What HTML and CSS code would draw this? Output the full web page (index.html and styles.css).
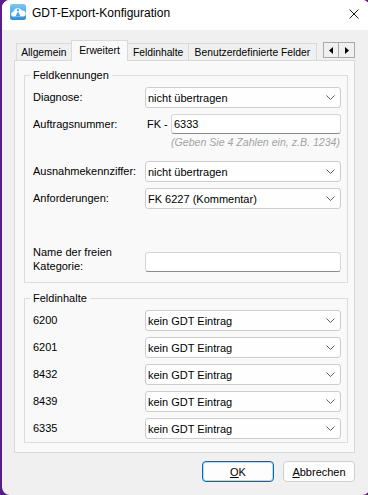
FILE: index.html
```
<!DOCTYPE html>
<html lang="de">
<head>
<meta charset="utf-8">
<title>GDT-Export-Konfiguration</title>
<link rel="stylesheet" href="styles.css">
</head>
<body>
<div class="window">
  <div class="titlebar">
    <svg class="app-icon" width="16" height="16" viewBox="0 0 16 16">
      <defs>
        <linearGradient id="ig" x1="0" y1="0" x2="0" y2="1">
          <stop offset="0" stop-color="#7cc8f6"/>
          <stop offset="1" stop-color="#2d8fe0"/>
        </linearGradient>
      </defs>
      <rect x="0" y="0" width="16" height="16" rx="2.5" fill="url(#ig)"/>
      <path d="M2.5 12.5 A2.6 2.6 0 0 1 3.6 7.6 A4.4 4.4 0 0 1 11.8 6.6 A3 3 0 0 1 13.5 12.5 Z" fill="#fff"/>
      <path d="M8 7.2 L10.6 12.5 H5.4 Z" fill="#4aa6ea"/>
      <circle cx="8" cy="6.2" r="1.1" fill="#4aa6ea"/>
    </svg>
    <div class="title">GDT-Export-Konfiguration</div>
    <svg class="close" width="10" height="10" viewBox="0 0 10 10">
      <path d="M0.5 0.5 L9.5 9.5 M9.5 0.5 L0.5 9.5" stroke="#1a1a1a" stroke-width="1" fill="none"/>
    </svg>
  </div>

  <div class="content">
    <div class="tabs">
      <div class="tab tab-allg">Allgemein</div>
      <div class="tab tab-active">Erweitert</div>
      <div class="tab tab-feld">Feldinhalte</div>
      <div class="tab tab-benutzer">Benutzerdefinierte Felder</div>
      <div class="tab-scroll">
        <div class="scroll-btn">
          <svg width="4" height="7" viewBox="0 0 4 7"><path d="M4 0 L0 3.5 L4 7 Z" fill="#000"/></svg>
        </div>
        <div class="scroll-btn">
          <svg width="4" height="7" viewBox="0 0 4 7"><path d="M0 0 L4 3.5 L0 7 Z" fill="#000"/></svg>
        </div>
      </div>
    </div>

    <div class="panel">
      <fieldset class="group group-first">
        <legend>Feldkennungen</legend>
        <div class="row row-first">
          <div class="label">Diagnose:</div>
          <div class="combo"><span>nicht übertragen</span><svg class="chev" width="9" height="5" viewBox="0 0 9 5"><path d="M0.5 0.5 L4.5 4.5 L8.5 0.5" stroke="#5f5f5f" fill="none"/></svg></div>
        </div>
        <div class="row row-gap">
          <div class="label">Auftragsnummer:</div>
          <div class="fk">FK -</div>
          <div class="textbox textbox-fk">6333</div>
        </div>
        <div class="hint">(Geben Sie 4 Zahlen ein, z.B. 1234)</div>
        <div class="row row-ausnahme">
          <div class="label">Ausnahmekennziffer:</div>
          <div class="combo"><span>nicht übertragen</span><svg class="chev" width="9" height="5" viewBox="0 0 9 5"><path d="M0.5 0.5 L4.5 4.5 L8.5 0.5" stroke="#5f5f5f" fill="none"/></svg></div>
        </div>
        <div class="row row-gap">
          <div class="label">Anforderungen:</div>
          <div class="combo"><span>FK 6227 (Kommentar)</span><svg class="chev" width="9" height="5" viewBox="0 0 9 5"><path d="M0.5 0.5 L4.5 4.5 L8.5 0.5" stroke="#5f5f5f" fill="none"/></svg></div>
        </div>
        <div class="row row-name">
          <div class="label label-two">Name der freien<br>Kategorie:</div>
          <div class="textbox textbox-name"></div>
        </div>
      </fieldset>

      <fieldset class="group group-second">
        <legend>Feldinhalte</legend>
        <div class="row row-first">
          <div class="label">6200</div>
          <div class="combo"><span>kein GDT Eintrag</span><svg class="chev" width="9" height="5" viewBox="0 0 9 5"><path d="M0.5 0.5 L4.5 4.5 L8.5 0.5" stroke="#5f5f5f" fill="none"/></svg></div>
        </div>
        <div class="row row-gap">
          <div class="label">6201</div>
          <div class="combo"><span>kein GDT Eintrag</span><svg class="chev" width="9" height="5" viewBox="0 0 9 5"><path d="M0.5 0.5 L4.5 4.5 L8.5 0.5" stroke="#5f5f5f" fill="none"/></svg></div>
        </div>
        <div class="row row-gap">
          <div class="label">8432</div>
          <div class="combo"><span>kein GDT Eintrag</span><svg class="chev" width="9" height="5" viewBox="0 0 9 5"><path d="M0.5 0.5 L4.5 4.5 L8.5 0.5" stroke="#5f5f5f" fill="none"/></svg></div>
        </div>
        <div class="row row-gap">
          <div class="label">8439</div>
          <div class="combo"><span>kein GDT Eintrag</span><svg class="chev" width="9" height="5" viewBox="0 0 9 5"><path d="M0.5 0.5 L4.5 4.5 L8.5 0.5" stroke="#5f5f5f" fill="none"/></svg></div>
        </div>
        <div class="row row-gap">
          <div class="label">6335</div>
          <div class="combo"><span>kein GDT Eintrag</span><svg class="chev" width="9" height="5" viewBox="0 0 9 5"><path d="M0.5 0.5 L4.5 4.5 L8.5 0.5" stroke="#5f5f5f" fill="none"/></svg></div>
        </div>
      </fieldset>
    </div>

    <div class="buttons">
      <div class="btn btn-default"><span class="u">O</span>K</div>
      <div class="btn"><span class="u">A</span>bbrechen</div>
    </div>
  </div>
</div>
</body>
</html>
```

FILE: styles.css
```
* {
  box-sizing: border-box;
}

html,
body {
  margin: 0;
  padding: 0;
}

body {
  width: 368px;
  height: 495px;
  overflow: hidden;
  background: #5a1c88;
  font-family: "Liberation Sans", Arial, sans-serif;
  font-size: 11px;
  color: #000;
}

.window {
  margin-left: 2px;
  width: 368px;
  height: 495px;
  background: #f0f0f0;
  border-radius: 8px;
  overflow: hidden;
  display: flex;
  flex-direction: column;
}

/* ---------- title bar ---------- */
.titlebar {
  flex: none;
  height: 30px;
  background: #ffffff;
  display: flex;
  align-items: flex-start;
}

.app-icon {
  flex: none;
  margin-left: 8px;
  margin-top: 4px;
}

.title {
  margin-left: 6px;
  margin-top: 5px;
  font-size: 12px;
  line-height: 16px;
  color: #000;
}

.close {
  flex: none;
  margin-left: auto;
  margin-right: 11px;
  margin-top: 9px;
}

/* ---------- content ---------- */
.content {
  flex: 1;
  display: flex;
  flex-direction: column;
  padding: 10px 15px 0 12px;
}

.tabs {
  display: flex;
  align-items: flex-end;
  height: 20px;
  margin-left: 2px;
  position: relative;
  z-index: 1;
}

.tab {
  height: 17px;
  border: 1px solid #d9d9d9;
  border-bottom: none;
  background: #f0f0f0;
  font-size: 10.3px;
  line-height: 14px;
  display: flex;
  align-items: center;
  justify-content: center;
  margin-right: -1px;
  padding-top: 1px;
  white-space: nowrap;
}

.tab-allg {
  width: 56px;
}

.tab-active {
  width: 58px;
  height: 21px;
  margin-bottom: -1px;
  background: #f9f9f9;
  padding-top: 0;
  padding-bottom: 1px;
  position: relative;
  z-index: 2;
}

.tab-feld {
  width: 62px;
}

.tab-benutzer {
  width: 130px;
}

.tab-scroll {
  align-self: flex-start;
  margin-top: 2px;
  margin-left: 7px;
  display: flex;
}

.scroll-btn {
  width: 16px;
  height: 16px;
  border: 1px solid #a9a9a9;
  background: #f0f0f0;
  display: flex;
  align-items: center;
  justify-content: center;
}

.scroll-btn + .scroll-btn {
  border-left: none;
  width: 16px;
}

.panel {
  flex: none;
  border: 1px solid #d9d9d9;
  background: #f9f9f9;
  padding: 0 6px 9px 9px;
  display: flex;
  flex-direction: column;
}

/* ---------- group boxes ---------- */
.group {
  margin: 0;
  padding: 0 6px 9px 8px;
  border: 1px solid #dcdcdc;
  min-width: 0;
}

.group legend {
  margin-left: -3px;
  padding: 0 3px;
  line-height: 13px;
  font-size: 11px;
}

.group-first {
  margin-top: 8px;
}

.group-second {
  margin-top: 9px;
  padding-bottom: 3px;
}

.row {
  display: flex;
  align-items: center;
}

.row-first {
  margin-top: 5px;
}

.row-gap {
  margin-top: 6px;
}

.row-ausnahme {
  margin-top: 12px;
}

.row-name {
  margin-top: 36px;
  align-items: flex-end;
}

.label {
  flex: none;
  width: 112px;
  line-height: 13px;
}

.label-two {
  line-height: 14px;
}

.combo {
  flex: 1;
  height: 21px;
  border: 1px solid #cdcdcd;
  border-radius: 3px;
  background: #fefefe;
  display: flex;
  align-items: center;
  padding-left: 2px;
  white-space: nowrap;
}

.chev {
  margin-left: auto;
  margin-right: 5px;
  flex: none;
}

.fk {
  flex: none;
  width: 26px;
  padding-left: 2px;
}

.textbox {
  flex: 1;
  height: 20px;
  border: 1px solid #d6d6d6;
  border-bottom-color: #8c8c8c;
  border-radius: 3px;
  background: #ffffff;
  padding-left: 2px;
  display: flex;
  align-items: center;
}

.textbox-name {
  margin-bottom: 1px;
}

.hint {
  margin-top: 2px;
  text-align: right;
  font-style: italic;
  font-size: 10.6px;
  color: #a3a3a3;
  line-height: 13px;
  padding-right: 1px;
}

/* ---------- buttons ---------- */
.buttons {
  display: flex;
  justify-content: flex-end;
  gap: 9px;
  margin-top: 8px;
}

.btn {
  width: 72px;
  height: 21px;
  border: 1px solid #d0d0d0;
  border-radius: 4px;
  background: #fdfdfd;
  display: flex;
  align-items: center;
  justify-content: center;
  font-size: 11px;
}

.btn-default {
  border-color: #0067c0;
  box-shadow: inset 0 0 0 1px rgba(0, 103, 192, 0.25);
}

.u {
  text-decoration: underline;
}
```
